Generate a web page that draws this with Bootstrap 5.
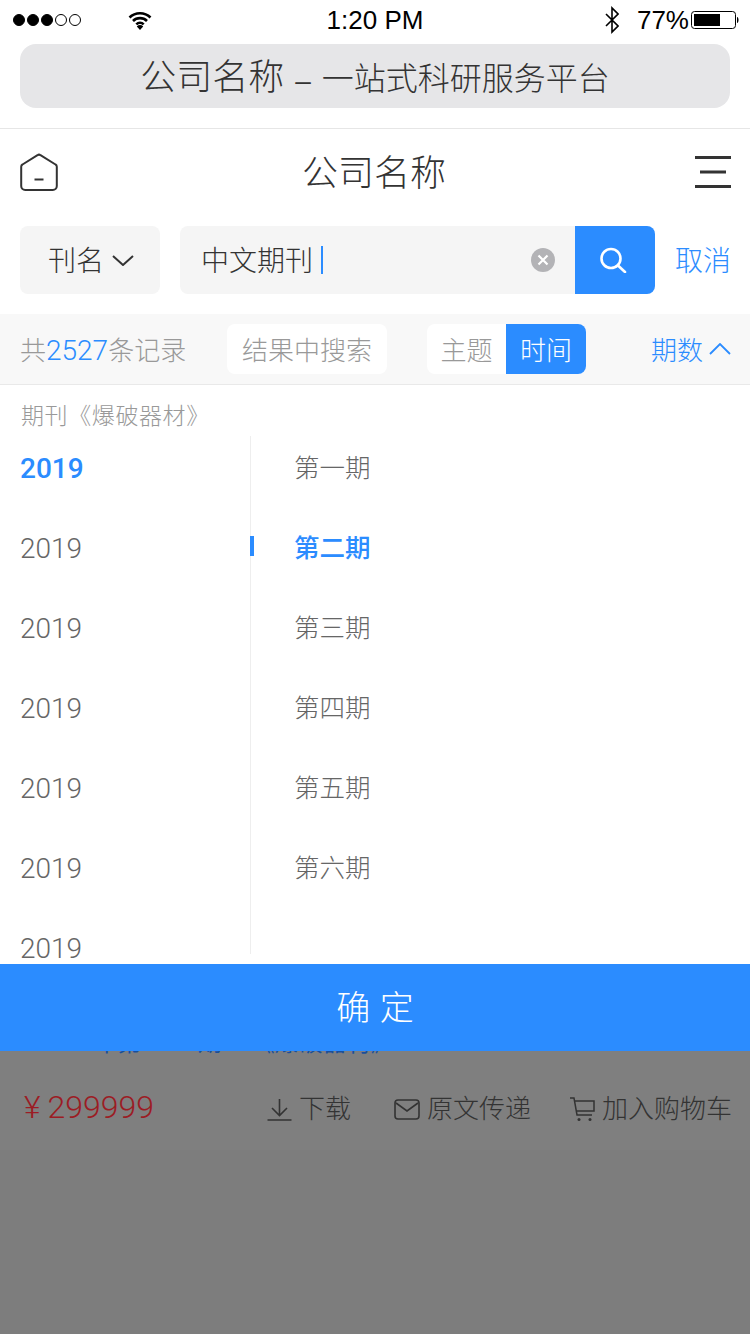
<!DOCTYPE html>
<html lang="zh-CN">
<head>
  <meta charset="UTF-8" />
  <title>公司名称</title>
  <meta name="viewport" content="width=device-width, initial-scale=1" />
  <link href="https://cdn.jsdelivr.net/npm/bootstrap@5.3.0/dist/css/bootstrap.min.css" rel="stylesheet" />
  <style>
    html, body { height: 100%; }
    body {
      width: 750px;
      height: 1334px;
      overflow: hidden;
      margin: 0;
      background: #7f7f7f;
      font-family: "Liberation Sans", "Noto Sans CJK SC", sans-serif;
      color: #333;
    }
    .sheet { height: 1051px; background: #fff; display: flex; flex-direction: column; overflow: hidden; }
    .nudge { padding-top: 4px; }
    .digits { font-family: Roboto, "Noto Sans CJK SC", sans-serif; font-weight: 300; font-size: 28px; }

    .status-bar { height: 40px; padding: 0 11px 0 13px; font-size: 26px; color: #000; position: relative; flex: none; }
    .status-time { position: absolute; left: 0; right: 0; top: 0; line-height: 40px; text-align: center; }
    .sig-dot { width: 12px; height: 12px; border-radius: 50%; border: 1px solid #000; margin-right: 2px; }
    .sig-dot.on { background: #000; }
    .wifi-icon { margin-left: 45px; }
    .batt-text { line-height: 40px; margin: 0 2px 0 18px; }

    .url-bar { height: 64px; margin: 4px 20px 0; background: #e6e6e8; border-radius: 16px; font-size: 36px; line-height: 68px; text-align: center; color: #333; font-weight: 300; flex: none; overflow: hidden; }
    .url-rest { font-size: 32px; }
    .url-dash { font-size: 28px; padding: 0 1px; }

    .head-bar { margin-top: 20px; height: 87px; padding: 0 19px 0 20px; border-top: 1px solid #e6e6e6; font-size: 36px; font-weight: 300; color: #333; flex: none; }
    .head-title { margin-right: 5px; }

    .search-row { padding: 11px 19px 0 20px; height: 78px; flex: none; }
    .field-pick { width: 140px; height: 68px; background: #f5f5f5; border-radius: 8px; font-size: 28px; font-weight: 300; gap: 8px; padding-left: 2px; margin-right: 20px; }
    .search-box { width: 395px; height: 68px; background: #f5f5f5; border-radius: 8px 0 0 8px; padding: 0 20px 0 21px; font-size: 28px; font-weight: 300; }
    .caret-line { width: 2px; height: 28px; background: #2b8cff; margin-left: 8px; }
    .clear-dot { width: 24px; height: 24px; border-radius: 50%; background: #b3b3b6; margin-left: auto; }
    .search-go { width: 80px; height: 68px; background: #2b8cff; border-radius: 0 8px 8px 0; padding-right: 3px; margin-right: 20px; }
    .cancel-link { font-size: 28px; line-height: 72px; font-weight: 300; color: #2b8cff; white-space: nowrap; }

    .filter-bar { margin-top: 21px; height: 71px; background: #f8f8f8; border-bottom: 1px solid #e9e9e9; padding: 0 19px 0 20px; font-size: 26px; font-weight: 300; color: #999; flex: none; }
    .count-text { width: 207px; line-height: 54px; height: 50px; }
    .num-blue { color: #2b8cff; }
    .in-results { width: 160px; height: 50px; line-height: 54px; background: #fff; border-radius: 8px; text-align: center; }
    .sort-group { margin-left: 40px; height: 50px; line-height: 54px; border-radius: 8px; overflow: hidden; background: #fff; }
    .sort-group span { display: block; width: 80px; text-align: center; }
    .sort-group .sort-first { width: 79px; }
    .sort-group .sort-on { background: #2b8cff; color: #fff; }
    .period-toggle { margin-left: auto; color: #2b8cff; gap: 6px; }

    .crumb { height: 51px; padding: 17px 0 0 21px; line-height: 28px; font-size: 23px; letter-spacing: .6px; font-weight: 300; color: #999; flex: none; }
    .pick-area { height: 518px; flex: none; }
    .year-col { width: 251px; border-right: 1px solid #eee; position: relative; }
    .pick-item { height: 80px; line-height: 64px; font-size: 26px; font-weight: 300; color: #666; }
    .year-col .pick-item { padding-left: 20px; font-size: 28px; line-height: 66px; }
    .year-col .pick-item.on { font-weight: 500; }
    .issue-col .pick-item { padding-left: 43px; font-size: 25.5px; line-height: 65px; }
    .pick-item.on { color: #2b8cff; font-weight: 500; }
    .year-mark { position: absolute; left: 250px; top: 100px; width: 4px; height: 20px; background: #2b8cff; }

    .confirm-btn { height: 87px; margin-top: 10px; padding-top: 8px; border: 0; border-radius: 0; width: 100%; background: #2b8cff; color: #fff; font-size: 34px; font-weight: 300; flex: none; }
    .confirm-btn:hover { background: #2b8cff; color: #fff; }

    .peek-row { height: 6px; overflow: hidden; padding-left: 40px; font-size: 24px; word-spacing: 8px; line-height: 30px; color: #1c4f99; }
    .peek-row div { margin-top: -23px; }
    .dim-row { height: 93px; padding: 11px 18px 0 24px; font-size: 26px; font-weight: 300; color: #333; }
    .price-text { color: #9c1c24; margin-right: auto; margin-bottom: 4px; font-size: 32px; }
    .price-sign { margin-right: 7px; }
    .dim-action { gap: 7px; }
    .dim-mail { margin-left: 43px; }
    .dim-cart { margin-left: 38px; }
    .dim-rest { height: 184px; background: #7d7d7d; }
  </style>
</head>
<body>
  <div class="sheet">
    <div class="status-bar d-flex align-items-center">
      <span class="sig-dot on"></span><span class="sig-dot on"></span><span class="sig-dot on"></span><span class="sig-dot"></span><span class="sig-dot"></span>
      <svg class="wifi-icon" width="24" height="19" viewBox="0 0 24 19"><path d="M1.5 6.5a15 15 0 0 1 21 0M5 10a10 10 0 0 1 14 0M8.3 13.4a5.3 5.3 0 0 1 7.4 0" fill="none" stroke="#000" stroke-width="2.6"/><path d="M12 19l-3.2-3.6a4.5 4.5 0 0 1 6.4 0z"/></svg>
      <div class="status-time">1:20 PM</div>
      <div class="ms-auto d-flex align-items-center">
        <svg width="14" height="28" viewBox="0 0 14 28"><path d="M1 8l12 12-6 6V2l6 6L1 20" fill="none" stroke="#000" stroke-width="1.6"/></svg>
        <span class="batt-text">77%</span>
        <svg width="48" height="20" viewBox="0 0 48 20"><rect x="0.5" y="1.5" width="44" height="17" rx="3" fill="none" stroke="#000"/><rect x="3" y="4" width="26" height="12"/><path d="M46 7c2 0 2 6 0 6z"/></svg>
      </div>
    </div>

    <div class="url-bar">公司名称 <span class="url-dash">–</span> <span class="url-rest">一站式科研服务平台</span></div>

    <div class="head-bar d-flex align-items-center justify-content-between">
      <svg width="38" height="38" viewBox="0 0 38 38"><path d="M17.5 2.2a2.5 2.5 0 0 1 3 0L35.5 11.5a2.5 2.5 0 0 1 1.3 2.2V33a4 4 0 0 1-4 4H5.2a4 4 0 0 1-4-4V13.7a2.5 2.5 0 0 1 1.3-2.2z" fill="none" stroke="#333" stroke-width="2" stroke-linejoin="round"/><path d="M14.5 26.5h9" stroke="#333" stroke-width="2"/></svg>
      <span class="head-title nudge">公司名称</span>
      <svg width="36" height="32" viewBox="0 0 36 32"><path d="M0 1.5h36M5 16h26M0 30.5h36" stroke="#333" stroke-width="3"/></svg>
    </div>

    <div class="search-row d-flex align-items-start">
      <div class="field-pick d-flex align-items-center justify-content-center"><span class="nudge">刊名</span>
        <svg width="22" height="11" viewBox="0 0 22 11"><path d="M1 1l10 9 10-9" fill="none" stroke="#333" stroke-width="2"/></svg>
      </div>
      <div class="search-box d-flex align-items-center"><span class="nudge">中文期刊</span><span class="caret-line"></span>
        <span class="clear-dot d-flex align-items-center justify-content-center"><svg width="12" height="12" viewBox="0 0 12 12"><path d="M1.5 1.5l9 9M10.5 1.5l-9 9" stroke="#fff" stroke-width="2.2"/></svg></span>
      </div>
      <div class="search-go d-flex align-items-center justify-content-center">
        <svg width="28" height="26" viewBox="0 0 28 26"><circle cx="12" cy="11.5" r="9.5" fill="none" stroke="#fff" stroke-width="2.6"/><path d="M19 18.5l7 6.5" stroke="#fff" stroke-width="2.6" stroke-linecap="round"/></svg>
      </div>
      <span class="cancel-link">取消</span>
    </div>

    <div class="filter-bar d-flex align-items-center">
      <span class="count-text">共<span class="num-blue digits">2527</span>条记录</span>
      <span class="in-results">结果中搜索</span>
      <div class="sort-group d-flex"><span class="sort-first">主题</span><span class="sort-on">时间</span></div>
      <div class="period-toggle d-flex align-items-center"><span class="nudge">期数</span>
        <svg width="22" height="12" viewBox="0 0 22 12"><path d="M1 11L11 1l10 10" fill="none" stroke="#2b8cff" stroke-width="1.8"/></svg>
      </div>
    </div>

    <div class="crumb">期刊《爆破器材》</div>

    <div class="pick-area d-flex">
      <div class="year-col">
        <div class="pick-item digits on">2019</div>
        <div class="pick-item digits">2019</div>
        <div class="pick-item digits">2019</div>
        <div class="pick-item digits">2019</div>
        <div class="pick-item digits">2019</div>
        <div class="pick-item digits">2019</div>
        <div class="pick-item digits">2019</div>
        <span class="year-mark"></span>
      </div>
      <div class="issue-col flex-fill">
        <div class="pick-item">第一期</div>
        <div class="pick-item on">第二期</div>
        <div class="pick-item">第三期</div>
        <div class="pick-item">第四期</div>
        <div class="pick-item">第五期</div>
        <div class="pick-item">第六期</div>
      </div>
    </div>

    <button type="button" class="btn confirm-btn">确 定</button>
  </div>

  <div class="peek-row"><div>2019年第 02 期 &nbsp;《爆破器材》</div></div>
  <div class="dim-row d-flex align-items-center">
    <span class="price-text digits"><span class="price-sign">¥</span>299999</span>
    <span class="dim-action d-flex align-items-center">
      <svg width="25" height="23" viewBox="0 0 25 23"><path d="M12.5 1v16M5 10l7.500 7.500L20 10M0.500 22h24" fill="none" stroke="#333" stroke-width="1.6"/></svg><span>下载</span></span>
    <span class="dim-action dim-mail d-flex align-items-center">
      <svg width="26" height="21" viewBox="0 0 26 21"><rect x="1" y="1" width="24" height="19" rx="3" fill="none" stroke="#333" stroke-width="1.6"/><path d="M2 4l11 8 11-8" fill="none" stroke="#333" stroke-width="1.6"/></svg><span>原文传递</span></span>
    <span class="dim-action dim-cart d-flex align-items-center">
      <svg width="26" height="25" viewBox="0 0 26 25"><path d="M1 1h4l3 17h15M6 4h19v10H7.500" fill="none" stroke="#333" stroke-width="1.5"/><circle cx="10" cy="22.500" r="1.500" fill="#333"/><circle cx="21" cy="22.500" r="1.500" fill="#333"/></svg><span>加入购物车</span></span>
  </div>
  <div class="dim-rest"></div>

  <script src="https://cdn.jsdelivr.net/npm/bootstrap@5.3.0/dist/js/bootstrap.bundle.min.js"></script>
</body>
</html>
